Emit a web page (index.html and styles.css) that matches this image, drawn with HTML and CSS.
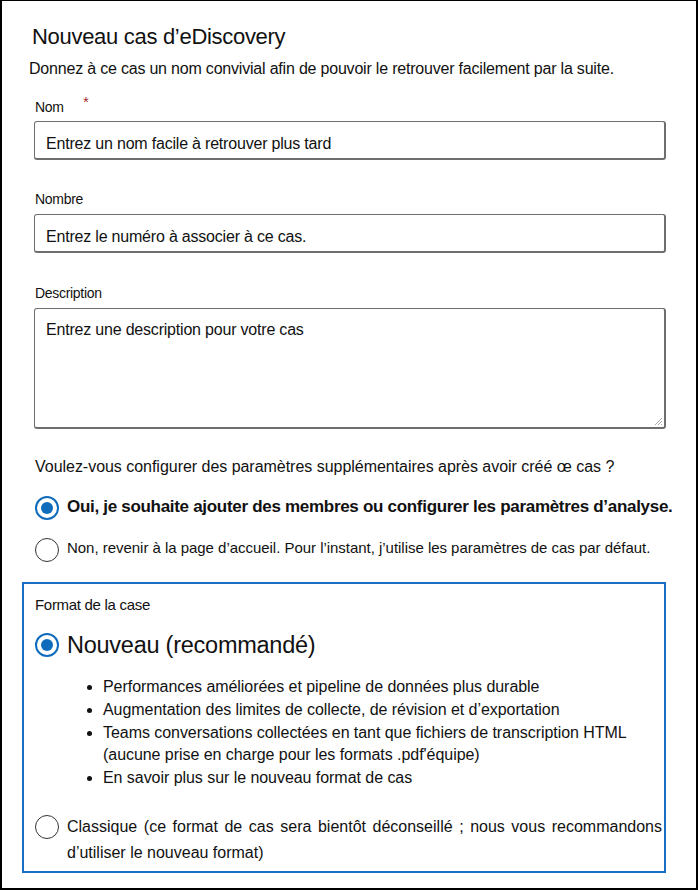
FILE: index.html
```html
<!DOCTYPE html>
<html lang="fr">
<head>
<meta charset="utf-8">
<link rel="stylesheet" href="styles.css">
</head>
<body>
<div class="page">
  <h1 class="title">Nouveau cas d’eDiscovery</h1>
  <p class="intro">Donnez à ce cas un nom convivial afin de pouvoir le retrouver facilement par la suite.</p>

  <div class="field field-nom">
    <label class="label">Nom <span class="req">*</span></label>
    <div class="input">Entrez un nom facile à retrouver plus tard</div>
  </div>

  <div class="field field-nombre">
    <label class="label">Nombre</label>
    <div class="input">Entrez le numéro à associer à ce cas.</div>
  </div>

  <div class="field field-desc">
    <label class="label">Description</label>
    <div class="textarea">Entrez une description pour votre cas
      <svg class="grip" width="10" height="10" viewBox="0 0 10 10"><path d="M9 2 L2 9 M9 5 L5 9 M9 8 L8 9" stroke="#aaa" stroke-width="1"/></svg>
    </div>
  </div>

  <p class="question">Voulez-vous configurer des paramètres supplémentaires après avoir créé œ cas ?</p>

  <div class="radio-row row-oui">
    <span class="radio checked"></span>
    <span class="radio-text bold">Oui, je souhaite ajouter des membres ou configurer les paramètres d’analyse.</span>
  </div>
  <div class="radio-row row-non">
    <span class="radio"></span>
    <span class="radio-text small">Non, revenir à la page d’accueil. Pour l’instant, j’utilise les paramètres de cas par défaut.</span>
  </div>

  <div class="format-box">
    <div class="format-label">Format de la case</div>
    <div class="radio-row row-nouveau">
      <span class="radio checked"></span>
      <span class="radio-text big">Nouveau (recommandé)</span>
    </div>
    <ul class="bullets">
      <li>Performances améliorées et pipeline de données plus durable</li>
      <li>Augmentation des limites de collecte, de révision et d’exportation</li>
      <li>Teams conversations collectées en tant que fichiers de transcription HTML<br>(aucune prise en charge pour les formats .pdf'équipe)</li>
      <li>En savoir plus sur le nouveau format de cas</li>
    </ul>
    <div class="radio-row row-classique">
      <span class="radio"></span>
      <span class="radio-text classic">Classique (ce format de cas sera bientôt déconseillé ; nous vous recommandons d’utiliser le nouveau format)</span>
    </div>
  </div>
</div>
</body>
</html>
```

FILE: styles.css
```css
html, body {
  margin: 0;
  padding: 0;
  background: #fff;
}
body {
  font-family: "Liberation Sans", Arial, sans-serif;
  color: #111;
}
.page {
  box-sizing: border-box;
  width: 698px;
  height: 890px;
  border: 2px solid #000;
  border-top: 1px solid #000;
  padding: 0 0 0 20px;
}
.title {
  margin: 23px 0 0 10px;
  font-size: 22px;
  font-weight: normal;
  letter-spacing: -0.3px;
  line-height: 26px;
  color: #111;
}
.intro {
  margin: 9px 0 0 7px;
  font-size: 16px;
  line-height: 20px;
  letter-spacing: -0.2px;
}
.field {
  margin-left: 12px;
  width: 632px;
}
.field-nom { margin-top: 19px; }
.field-nombre { margin-top: 30px; }
.field-desc { margin-top: 31px; }
.label {
  display: block;
  margin-left: 1px;
  font-size: 14px;
  line-height: 18px;
  letter-spacing: -0.3px;
}
.req {
  color: #a4262c;
  margin-left: 16px;
  position: relative;
  top: -5px;
}
.input {
  box-sizing: border-box;
  margin-top: 5px;
  height: 39px;
  border: 1px solid #6e6e6e;
  border-width: 1px 2px 2px 1px;
  border-radius: 3px;
  padding: 12px 11px 0;
  font-size: 16px;
  letter-spacing: -0.2px;
  line-height: 20px;
}
.field-nombre .input { margin-top: 6px; }
.textarea {
  position: relative;
  box-sizing: border-box;
  margin-top: 6px;
  height: 121px;
  border: 1px solid #6e6e6e;
  border-width: 1px 2px 2px 1px;
  border-radius: 3px;
  padding: 11px 11px 0;
  font-size: 16px;
  letter-spacing: -0.2px;
  line-height: 20px;
}
.grip {
  position: absolute;
  right: 1px;
  bottom: 1px;
}
.question {
  margin: 28px 0 0 13px;
  font-size: 16px;
  line-height: 20px;
  letter-spacing: -0.03px;
}
.radio-row {
  display: flex;
  align-items: center;
  gap: 8px;
  margin-left: 13px;
}
.radio {
  flex: none;
  box-sizing: border-box;
  width: 24px;
  height: 24px;
  border-radius: 50%;
  border: 1.5px solid #333;
  background: #fff;
  position: relative;
}
.radio.checked {
  border: 2px solid #0f6cbd;
}
.radio.checked::after {
  content: "";
  position: absolute;
  left: 4px;
  top: 4px;
  width: 12px;
  height: 12px;
  border-radius: 50%;
  background: #0f6cbd;
}
.row-oui { margin-top: 19px; }
.row-non { margin-top: 18px; }
.radio-text.bold {
  font-weight: bold;
  font-size: 17px;
  letter-spacing: -0.3px;
  margin-top: -3px;
}
.radio-text.small {
  font-size: 15px;
  letter-spacing: -0.03px;
  margin-top: -6px;
}
.format-box {
  box-sizing: border-box;
  width: 644px;
  height: 291px;
  margin: 20px 0 0 0;
  border: 2px solid #1a6fc4;
  padding-top: 12px;
}
.format-label {
  margin-left: 11px;
  font-size: 15px;
  line-height: 18px;
  letter-spacing: -0.3px;
}
.row-nouveau { margin-top: 17px; margin-left: 11px; }
.radio-text.big {
  font-size: 23.5px;
  letter-spacing: -0.25px;
  line-height: 28px;
}
.bullets {
  margin: 17px 0 0 0;
  padding-left: 79px;
  font-size: 16px;
  line-height: 22.75px;
  letter-spacing: -0.05px;
}
.bullets li {
  padding-left: 0;
}
.row-classique {
  margin-top: 24px;
  margin-left: 11px;
  align-items: flex-start;
}
.row-classique .radio { margin-top: 1px; }
.radio-text.classic {
  font-size: 16px;
  line-height: 26px;
  letter-spacing: 0;
  text-align: justify;
  padding-right: 2px;
}
```
